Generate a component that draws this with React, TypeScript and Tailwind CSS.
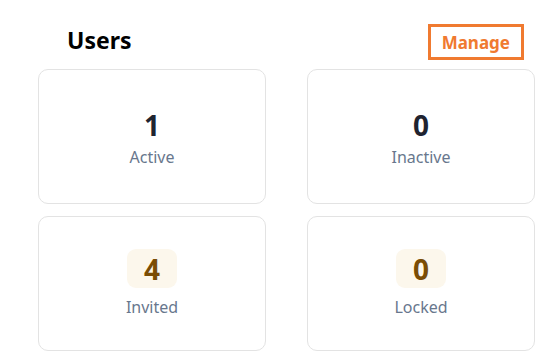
import React from 'react';

interface Stat {
  label: string;
  value: number;
  highlight?: boolean;
}

const stats: Stat[] = [
  { label: 'Active', value: 1 },
  { label: 'Inactive', value: 0 },
  { label: 'Invited', value: 4, highlight: true },
  { label: 'Locked', value: 0, highlight: true },
];

const StatCard: React.FC<{ stat: Stat }> = ({ stat }) => (
  <div className="h-[135px] rounded-[10px] border border-[#e3e3e3] bg-white flex flex-col items-center justify-center">
    {stat.highlight ? (
      <div className="mb-[8px] rounded-[9px] bg-[#fcf7ec] px-[17px] h-[39px] flex items-center text-[28px] font-bold text-[#7a4d05] leading-none">
        {stat.value}
      </div>
    ) : (
      <div className="mb-[1px] text-[28px] font-bold text-[#1f2430] leading-[39px]">{stat.value}</div>
    )}
    <div className="text-[16px] text-[#68778d] leading-[22px]">{stat.label}</div>
  </div>
);

export default function App() {
  return (
    <div className="w-[546px] h-[362px] bg-white pt-[24px] pl-[38px] pr-[11px]" style={{ fontFamily: '"Noto Sans", sans-serif' }}>
      <div className="flex items-center justify-between pl-[29px] pr-[11px] h-[36px]">
        <h2 className="-mt-[3px] text-[23px] font-bold text-black">Users</h2>
        <button className="h-[36px] px-[11px] border-[3px] border-[#f07a30] bg-white text-[17px] font-bold text-[#f07a30] leading-none">
          Manage
        </button>
      </div>
      <div className="mt-[9px] grid grid-cols-2 gap-x-[41px] gap-y-[12px]">
        {stats.map((s) => (
          <StatCard key={s.label} stat={s} />
        ))}
      </div>
    </div>
  );
}
